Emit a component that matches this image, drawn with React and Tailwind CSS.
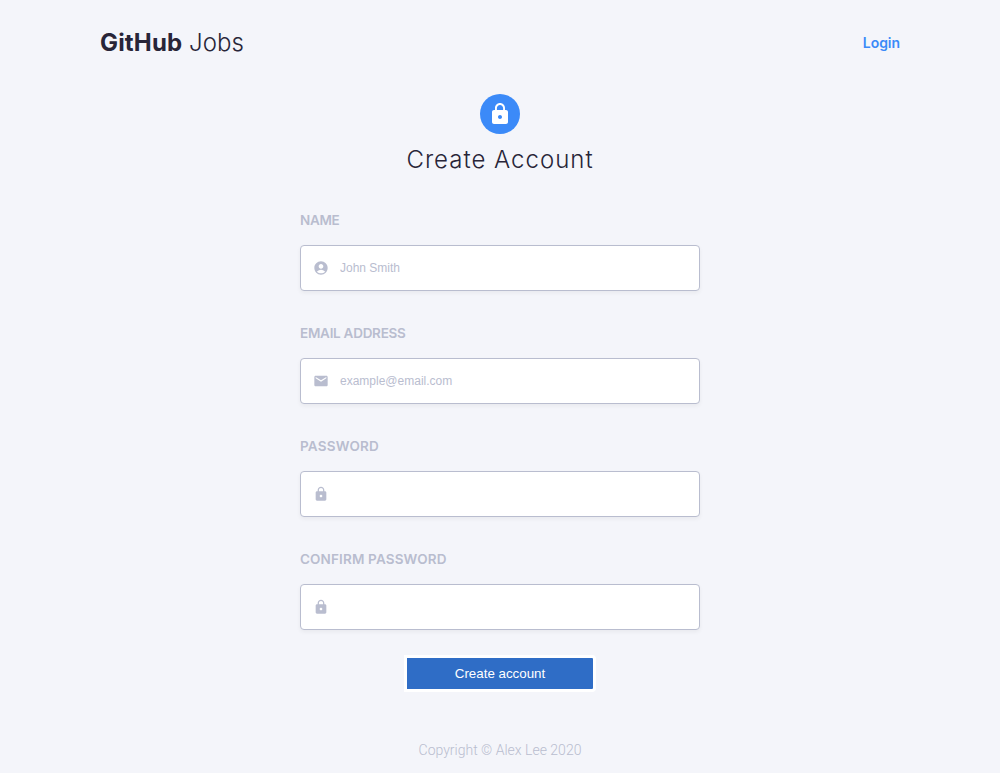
import { MdLock, MdEmail, MdAccountCircle } from "react-icons/md";

function Field({ label, tracking, Icon, type = "text", placeholder }) {
  return (
    <label className="block h-[113px]">
      <span className={`block h-5 whitespace-nowrap font-[Inter] text-[13.5px] leading-5 font-semibold text-[#b9bdcf] ${tracking}`}>{label}</span>
      <span className="mt-[15px] flex h-[46px] items-center rounded border border-[#b9bdcf] bg-white pl-3 shadow-[0_2px_4px_rgba(0,0,0,0.05)]">
        <Icon className="h-4 w-4 shrink-0 text-[#b9bdcf]" />
        <input type={type} placeholder={placeholder} className="ml-[11px] w-80 font-['Liberation_Sans',sans-serif] text-xs outline-none placeholder:text-[#b9bdcf]" />
      </span>
    </label>
  );
}

export default function App() {
  return (
    <div className="flex h-[773px] flex-col items-center overflow-hidden bg-[#f4f5fa] font-[Inter]">
      <header className="flex h-[86px] w-[800px] items-center justify-between">
        <h1 className="text-2xl font-light text-[#282538]"><b className="font-bold tracking-[0.15px]">GitHub</b> <span className="font-light tracking-[0.1px]">Jobs</span></h1>
        <a className="text-sm font-semibold tracking-[-0.05px] text-[#3b8af8]">Login</a>
      </header>
      <div className="mt-2 flex h-10 w-10 items-center justify-center rounded-full bg-[#3b8af8]"><MdLock className="h-6 w-6 text-white" /></div>
      <h2 className="mt-2 text-2xl leading-9 font-light tracking-[1px] text-[#282538]">Create Account</h2>
      <form className="mt-8 flex w-[400px] flex-col">
        <Field label="NAME" tracking="tracking-[-0.3px]" Icon={MdAccountCircle} placeholder="John Smith" />
        <Field label="EMAIL ADDRESS" tracking="tracking-[-0.27px]" Icon={MdEmail} placeholder="example@email.com" />
        <Field label="PASSWORD" tracking="tracking-[0.2px]" Icon={MdLock} type="password" />
        <Field label="CONFIRM PASSWORD" tracking="tracking-[0.15px]" Icon={MdLock} type="password" />
        <button type="submit" className="-mt-[7px] h-[37px] w-[192px] self-center rounded-r border-3 border-white bg-[#2f6dc6] font-['Liberation_Sans',sans-serif] text-[13.33px] text-white">Create account</button>
      </form>
      <footer className="mt-12 font-[Roboto] text-sm font-light text-[#b9bdcf]">Copyright © Alex Lee 2020</footer>
    </div>
  );
}
